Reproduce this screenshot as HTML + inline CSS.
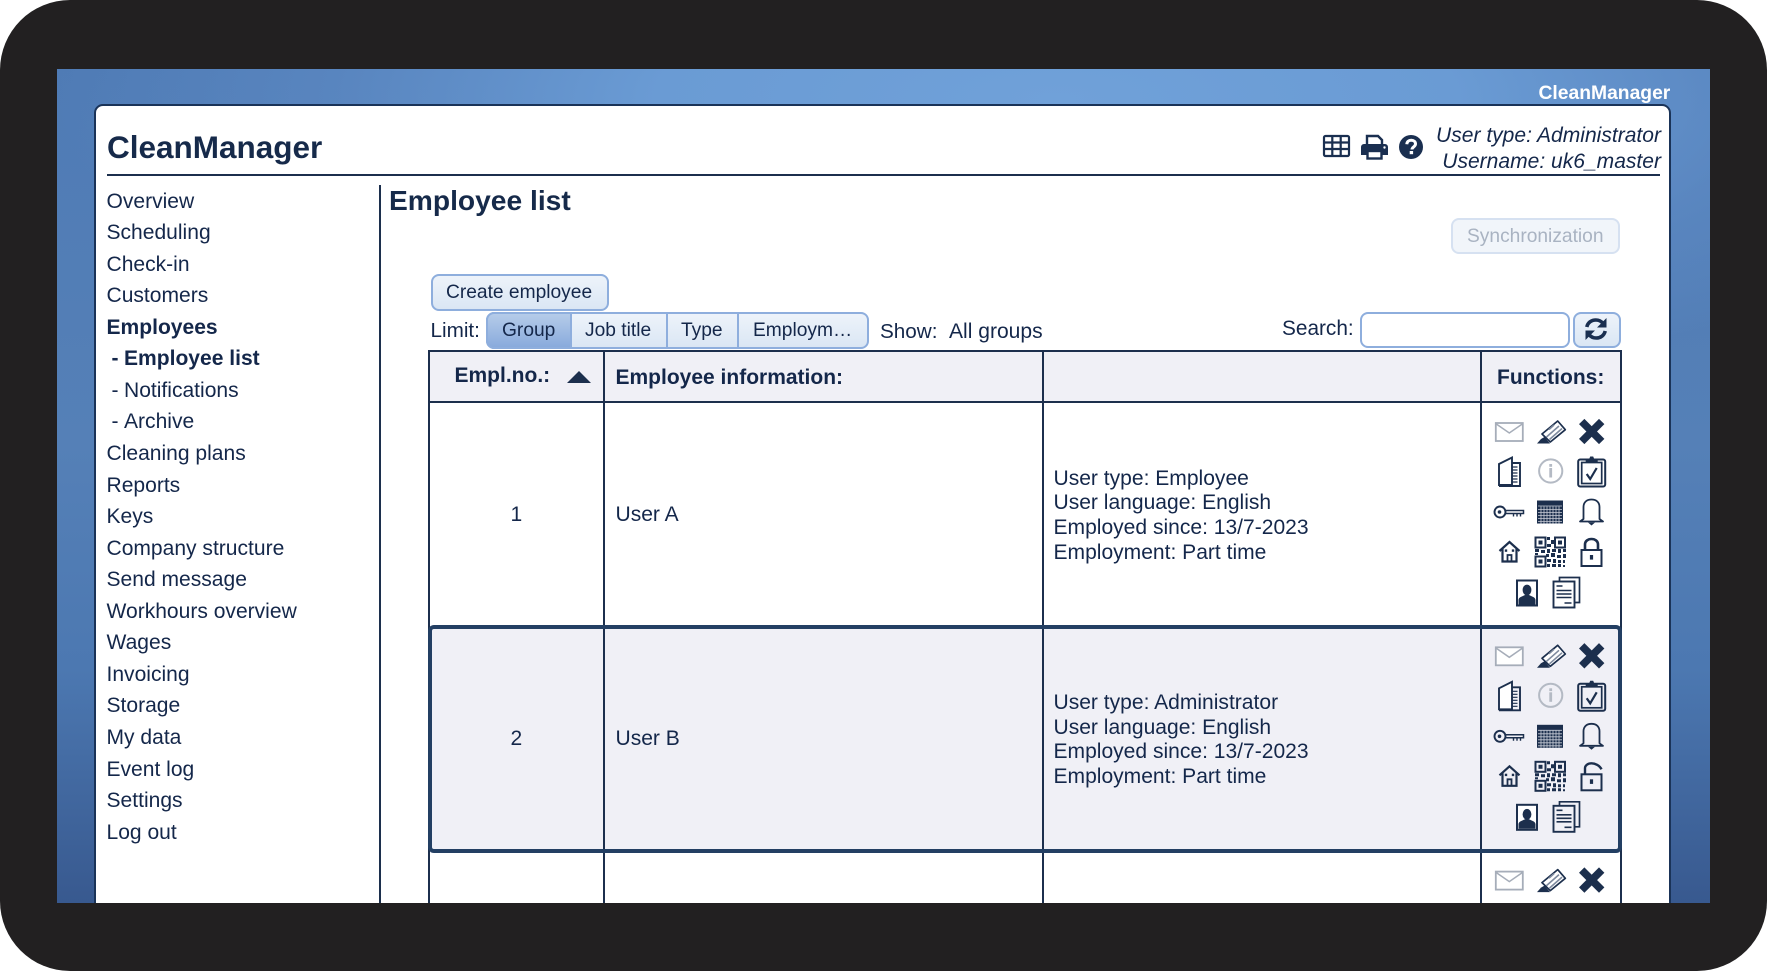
<!DOCTYPE html>
<html><head><meta charset="utf-8"><title>CleanManager</title>
<style>
html,body{margin:0;padding:0;background:#fff}
#o{position:relative;width:1767px;height:971px;overflow:hidden;background:#222021;border-radius:70px;font-family:"Liberation Sans",Arial,sans-serif;color:#14274a}
#b{position:absolute;left:57px;top:69px;width:1653px;height:834px;overflow:hidden;
background:radial-gradient(ellipse 1000px 300px at 1000px 30px,#70a1d9 0,#6a9bd4 40%,rgba(95,140,198,.6) 72%,rgba(80,122,180,0) 100%),linear-gradient(180deg,#4f7bb5 0,#5580b7 45%,#4c78b1 72%,#38598f 100%)}
#p{position:absolute;left:93.5px;top:104px;width:1577px;height:830px;box-sizing:border-box;background:#fff;border:2px solid #1a3358;border-radius:9px}
#c{position:absolute;left:0;top:0;width:1767px;height:903px;overflow:hidden;filter:blur(.3px)}
.t{position:absolute;white-space:nowrap;font-size:21.05px;line-height:26px}
.n{left:106.5px}
.bd{font-weight:bold}
.btn{position:absolute;box-sizing:border-box;border:2px solid #8eaedd;border-radius:8px;background:linear-gradient(#edf3fa,#dae6f4)}
.tl{position:absolute;background:#1c2f4d}
svg{position:absolute;overflow:visible}
</style></head><body>
<div id="o">
<div id="b"></div>
<div class="t bd" style="left:1538.5px;top:81px;color:#fff;font-size:19.3px">CleanManager</div>
<div id="c">
<div id="p"></div>
<div class="t bd" style="left:107px;top:129px;font-size:31.5px;line-height:36px;color:#162a4a">CleanManager</div>
<div class="tl" style="left:107px;top:174px;width:1553px;height:2px"></div>
<div class="t" style="right:106px;top:123px;font-style:italic;font-size:21.05px;text-align:right;line-height:26px">User type: Administrator<br>Username: uk6_master</div>

<svg style="left:1323px;top:135px" width="27" height="22" viewBox="0 0 27 22"><rect x="1" y="1" width="25" height="20" rx="1.5" fill="#fff" stroke="#1a2f50" stroke-width="2.2"/><path d="M1 7.5H26M1 14H26M9.3 1V21M17.7 1V21" stroke="#1a2f50" stroke-width="2.2"/></svg>
<svg style="left:1361px;top:134px" width="27" height="26" viewBox="0 0 27 26"><path d="M6 10V2h11l4 4v4" fill="#fff" stroke="#1a2f50" stroke-width="2.4"/><path d="M3 10h21a3 3 0 0 1 3 3v8h-6v-4H6v4H0v-8a3 3 0 0 1 3-3z" fill="#1a2f50"/><rect x="6.5" y="17" width="14" height="7.5" fill="#fff" stroke="#1a2f50" stroke-width="2.4"/><circle cx="23.5" cy="13.5" r="1.2" fill="#fff"/></svg>
<svg style="left:1399px;top:134.5px" width="24" height="24" viewBox="0 0 24 24"><circle cx="12" cy="12" r="12" fill="#1a2f50"/><path d="M7.8 9.2C8 6.6 9.8 5.2 12.2 5.2c2.6 0 4.3 1.6 4.3 3.7 0 3-3.5 3-3.5 5.6" fill="none" stroke="#fff" stroke-width="3"/><rect x="10.7" y="16" width="3.4" height="3.2" fill="#fff"/></svg>

<div class="tl" style="left:379px;top:185px;width:2px;height:720px"></div>

<div style="position:absolute;left:0;top:1px;width:370px">
<div class="t n" style="top:187.6px">Overview</div>
<div class="t n" style="top:219.1px">Scheduling</div>
<div class="t n" style="top:250.7px">Check-in</div>
<div class="t n" style="top:282.2px">Customers</div>
<div class="t n bd" style="top:313.8px">Employees</div>
<div class="t bd" style="left:111.5px;top:345.3px">-</div><div class="t bd" style="left:124px;top:345.3px">Employee list</div>
<div class="t" style="left:111.5px;top:376.9px">-</div><div class="t" style="left:124px;top:376.9px">Notifications</div>
<div class="t" style="left:111.5px;top:408.4px">-</div><div class="t" style="left:124px;top:408.4px">Archive</div>
<div class="t n" style="top:440px">Cleaning plans</div>
<div class="t n" style="top:471.5px">Reports</div>
<div class="t n" style="top:503.1px">Keys</div>
<div class="t n" style="top:534.6px">Company structure</div>
<div class="t n" style="top:566.2px">Send message</div>
<div class="t n" style="top:597.7px">Workhours overview</div>
<div class="t n" style="top:629.3px">Wages</div>
<div class="t n" style="top:660.8px">Invoicing</div>
<div class="t n" style="top:692.4px">Storage</div>
<div class="t n" style="top:723.9px">My data</div>
<div class="t n" style="top:755.5px">Event log</div>
<div class="t n" style="top:787px">Settings</div>
<div class="t n" style="top:818.6px">Log out</div>
</div>

<div class="t bd" style="left:389px;top:183px;font-size:28.2px;line-height:34px;color:#162a4a">Employee list</div>

<div class="btn" style="left:1451px;top:217.5px;width:169px;height:36px;border-color:#d6e1f1;background:#f1f5fa"></div>
<div class="t" style="left:1467px;top:223.5px;font-size:19.2px;color:#a9b3c2">Synchronization</div>

<div class="btn" style="left:431px;top:273.5px;width:178px;height:37px"></div>
<div class="t" style="left:446px;top:279.5px;font-size:19.2px">Create employee</div>

<div class="t" style="left:430.5px;top:318px;font-size:20.7px">Limit:</div>
<div class="btn" style="left:486px;top:312px;width:383px;height:36.5px"></div>
<div class="btn" style="left:486px;top:312px;width:86px;height:36.5px;border-radius:8px 0 0 8px;background:linear-gradient(#b5cbe9,#89aadc)"></div>
<div class="tl" style="left:666px;top:313px;width:2px;height:34px;background:#8eaedd"></div>
<div class="tl" style="left:737px;top:313px;width:2px;height:34px;background:#8eaedd"></div>
<div class="t" style="left:502px;top:318px;font-size:19.2px">Group</div>
<div class="t" style="left:585px;top:318px;font-size:19.2px">Job title</div>
<div class="t" style="left:681px;top:318px;font-size:19.2px">Type</div>
<div class="t" style="left:753px;top:318px;font-size:19.2px">Employm…</div>
<div class="t" style="left:880px;top:318.5px;font-size:20.7px">Show:</div>
<div class="t" style="left:949px;top:318.5px;font-size:21.05px">All groups</div>
<div class="t" style="left:1282px;top:316px;font-size:20.8px">Search:</div>
<div class="btn" style="left:1360px;top:312px;width:210px;height:36px;background:#fff"></div>
<div class="btn" style="left:1572.5px;top:312px;width:48px;height:36px"></div>
<svg style="left:1583.5px;top:317px" width="24" height="24" viewBox="0 0 24 24"><path d="M2.8 10C3.8 5.6 7.4 3 11.8 3c3 0 5.4 1.2 7.2 3.4" fill="none" stroke="#1a2f50" stroke-width="3.6"/><path d="M22.5 1V10.5h-9.5z" fill="#1a2f50"/><path d="M21.2 14C20.2 18.4 16.6 21 12.2 21c-3 0-5.4-1.2-7.2-3.4" fill="none" stroke="#1a2f50" stroke-width="3.6"/><path d="M1.5 23V13.5h9.5z" fill="#1a2f50"/></svg>

<div style="position:absolute;left:429px;top:351px;width:1192px;height:51px;background:#f0f0f6"></div>
<div style="position:absolute;left:429px;top:625.5px;width:1192px;height:227.5px;background:#f0f0f6"></div>
<div class="tl" style="left:428px;top:350px;width:1193.5px;height:2px"></div>
<div class="tl" style="left:428px;top:401px;width:1193.5px;height:2px"></div>
<div class="tl" style="left:428px;top:350px;width:2px;height:560px"></div>
<div class="tl" style="left:603px;top:350px;width:2px;height:560px"></div>
<div class="tl" style="left:1041.5px;top:350px;width:2px;height:560px"></div>
<div class="tl" style="left:1480px;top:350px;width:2px;height:560px"></div>
<div class="tl" style="left:1619.5px;top:350px;width:2px;height:560px"></div>
<div style="position:absolute;box-sizing:border-box;left:428px;top:625px;width:1193.5px;height:228px;border:4px solid #233f63;border-radius:6px"></div>

<div class="t bd" style="left:454.5px;top:362.5px;font-size:21px">Empl.no.:</div>
<svg style="left:567px;top:371px" width="24" height="12" viewBox="0 0 24 12"><path d="M12 0 24 12H0z" fill="#1c2f4d"/></svg>
<div class="t bd" style="left:615.5px;top:364.8px;font-size:21px">Employee information:</div>
<div class="t bd" style="left:1497px;top:364.8px;font-size:21px">Functions:</div>

<div class="t" style="left:510.5px;top:502px">1</div>
<div class="t" style="left:615.5px;top:502px">User A</div>
<div class="t" style="left:1053.5px;top:466.6px;line-height:24.75px">User type: Employee<br>User language: English<br>Employed since: 13/7-2023<br>Employment: Part time</div>
<div class="t" style="left:510.5px;top:726px">2</div>
<div class="t" style="left:615.5px;top:726px">User B</div>
<div class="t" style="left:1053.5px;top:690.9px;line-height:24.75px">User type: Administrator<br>User language: English<br>Employed since: 13/7-2023<br>Employment: Part time</div>

<svg width="0" height="0" style="left:0;top:0">
<defs>
<g id="env"><rect x="-13.5" y="-9" width="27" height="18" fill="#fff" stroke="#a6adb9" stroke-width="1.8"/><path d="M-13 -8 0 1 13 -8" fill="none" stroke="#a6adb9" stroke-width="1.5"/></g>
<g id="pen"><path d="M-9 2 6.7-11 14.3-2.3-0.7 10z" fill="#fff" stroke="#1c2f4d" stroke-width="1.7" stroke-linejoin="round"/><path d="M-4.5 5 8-6M-1.5 7.5 11-3.5M-2-2.5 3-7" stroke="#7e8a9e" stroke-width="1.6"/><path d="M-14 11.5H-1L-6.5 5-10 7z" fill="#1c2f4d"/></g>
<g id="x"><path d="M-10-10 10 10M10-10-10 10" stroke="#1c2f4d" stroke-width="7.6"/></g>
<g id="book"><path d="M-10.5-8 2.5-14.5V13H-10.5z" fill="#fff" stroke="#1c2f4d" stroke-width="1.9"/><path d="M2.5-9H10.5V14H-10.5" fill="none" stroke="#1c2f4d" stroke-width="1.9"/><path d="M3-5H8M3-2H8M3 1H8M3 4H8M3 7H8M3 10H8" stroke="#1c2f4d" stroke-width="1.2"/></g>
<g id="info"><circle r="11.6" fill="none" stroke="#b4bac4" stroke-width="2"/><rect x="-1.4" y="-3" width="2.8" height="9.5" fill="#b4bac4"/><rect x="-1.4" y="-7" width="2.8" height="2.8" fill="#b4bac4"/></g>
<g id="clip"><rect x="-13.5" y="-12.5" width="27" height="27" rx="2" fill="none" stroke="#1c2f4d" stroke-width="2"/><rect x="-10" y="-9.5" width="20" height="21" fill="none" stroke="#1c2f4d" stroke-width="1.7"/><path d="M-6-9.5V-13h3.5l1-2.5h3l1 2.5H6v3.5z" fill="#1c2f4d"/><path d="M-5 2-1.5 7 5-4" fill="none" stroke="#1c2f4d" stroke-width="2.2"/></g>
<g id="key"><circle cx="-9.5" r="5.5" fill="none" stroke="#1c2f4d" stroke-width="1.9"/><circle cx="-10" r="1.8" fill="#1c2f4d"/><path d="M-4-1.5H14V1.5H-4" fill="none" stroke="#1c2f4d" stroke-width="1.5"/><path d="M4 2V4.5M7.5 2V4.5M11 2V4.5" stroke="#1c2f4d" stroke-width="1.4"/></g>
<g id="cal"><rect x="-13" y="-11" width="26" height="23" fill="#1c2f4d"/><path d="M-12-5.5H12M-12-2H12M-12 1H12M-12 4H12M-12 7H12M-12 10H12M-9-5V12M-6-5V12M-3-5V12M0-5V12M3-5V12M6-5V12M9-5V12" stroke="#c7ccd6" stroke-width=".8"/></g>
<g id="bell"><path d="M-8 7V-5C-8-10-4.5-12.5 0-12.5S8-10 8-5V7L11.5 9.5H-11.5z" fill="none" stroke="#1c2f4d" stroke-width="1.8" stroke-linejoin="round"/><path d="M-3.5 10.5H3.5L0 13.5z" fill="#1c2f4d"/></g>
<g id="home"><path d="M-10-1 0-10 10-1M-7-3V9.5H7V-3" fill="none" stroke="#1c2f4d" stroke-width="2.2"/><path d="M-2 9V3H2V9" fill="none" stroke="#1c2f4d" stroke-width="1.8"/><rect x="-4.7" y="-2.6" width="2.4" height="2.4" fill="#1c2f4d"/><rect x="2.3" y="-2.6" width="2.4" height="2.4" fill="#1c2f4d"/></g>
<g id="qr"><g fill="none" stroke="#1c2f4d" stroke-width="2"><rect x="-14.5" y="-14.5" width="10" height="10"/><rect x="5" y="-14.5" width="10" height="10"/><rect x="-14.5" y="4.5" width="10" height="10"/></g><g fill="#1c2f4d"><rect x="-11.5" y="-11.5" width="4" height="4"/><rect x="8" y="-11.5" width="4" height="4"/><rect x="-11.5" y="7.5" width="4" height="4"/><path d="M-3-15H0V-12H-3zM1-12H4V-8H1zM-3-8H1V-5H-3zM-15-3H-11V0H-15zM-9-2H-5V1H-9zM-3-3H0V1H-3zM2-3H6V0H2zM8-3H11V1H8zM13-3H16V0H13zM-15 1H-12V3H-15zM-4 2H-1V5H-4zM1 1H5V5H1zM7 3H11V6H7zM13 2H16V6H13zM-3 7H1V10H-3zM3 7H6V11H3zM8 8H11V11H8zM13 8H15V11H13zM-3 12H0V15H-3zM2 12H6V15H2zM8 12H11V15H8zM13 13H15V15H13z"/></g></g>
<g id="lock"><path d="M-6.5-2V-7.5C-6.5-11-3.5-13 0-13S6.5-11 6.5-7.5V-2" fill="none" stroke="#1c2f4d" stroke-width="2.6"/><rect x="-10" y="-2" width="20" height="16" fill="none" stroke="#1c2f4d" stroke-width="2"/><rect x="-1.6" y="3" width="3.2" height="4.6" fill="#1c2f4d"/></g>
<g id="unl"><path d="M-6.5-2V-8C-6.5-11-3.5-13 0-13S8-11 10-7" fill="none" stroke="#1c2f4d" stroke-width="2.4"/><rect x="-10" y="-2" width="20" height="16" fill="none" stroke="#1c2f4d" stroke-width="2"/><rect x="-1.6" y="3" width="3.2" height="4.6" fill="#1c2f4d"/></g>
<g id="per"><rect x="-10" y="-12.5" width="20" height="25" fill="#fff" stroke="#1c2f4d" stroke-width="2"/><ellipse cy="-3" rx="4.4" ry="5.4" fill="#1c2f4d"/><path d="M-8.5 11.5V7C-8.5 4-4 3.2-2 2H2C4 3.2 8.5 4 8.5 7V11.5z" fill="#1c2f4d"/></g>
<g id="doc"><path d="M-7-11.5V-15H13V10H8" fill="none" stroke="#1c2f4d" stroke-width="1.7"/><rect x="-13" y="-11" width="21" height="26" fill="none" stroke="#1c2f4d" stroke-width="1.9"/><path d="M-10-6.5H-4M-10-2H5M-10 1.5H5M-10 5H5M-2 10.5H5" stroke="#1c2f4d" stroke-width="1.6"/></g>
</defs></svg>

<svg style="left:0;top:0" width="1767" height="903">
<g>
<use href="#env" x="1509.3" y="432"/><use href="#pen" x="1551" y="432"/><use href="#x" x="1591.7" y="431.5"/>
<use href="#book" x="1509.5" y="472"/><use href="#info" x="1550.7" y="471"/><use href="#clip" x="1591.7" y="472"/>
<use href="#key" x="1509.5" y="512"/><use href="#cal" x="1550" y="511.5"/><use href="#bell" x="1591.5" y="512"/>
<use href="#home" x="1509.5" y="552"/><use href="#qr" x="1550" y="552"/><use href="#lock" x="1591.5" y="552"/>
<use href="#per" x="1527" y="593"/><use href="#doc" x="1566.5" y="592.5"/>
</g>
<g>
<use href="#env" x="1509.3" y="656.3"/><use href="#pen" x="1551" y="656.3"/><use href="#x" x="1591.7" y="655.8"/>
<use href="#book" x="1509.5" y="696.3"/><use href="#info" x="1550.7" y="695.3"/><use href="#clip" x="1591.7" y="696.3"/>
<use href="#key" x="1509.5" y="736.3"/><use href="#cal" x="1550" y="735.8"/><use href="#bell" x="1591.5" y="736.3"/>
<use href="#home" x="1509.5" y="776.3"/><use href="#qr" x="1550" y="776.3"/><use href="#unl" x="1591.5" y="776.3"/>
<use href="#per" x="1527" y="817.3"/><use href="#doc" x="1566.5" y="816.8"/>
</g>
<use href="#env" x="1509.3" y="880.6"/><use href="#pen" x="1551" y="880.6"/><use href="#x" x="1591.7" y="880.1"/>
</svg>
</div>
</div>
</body></html>
